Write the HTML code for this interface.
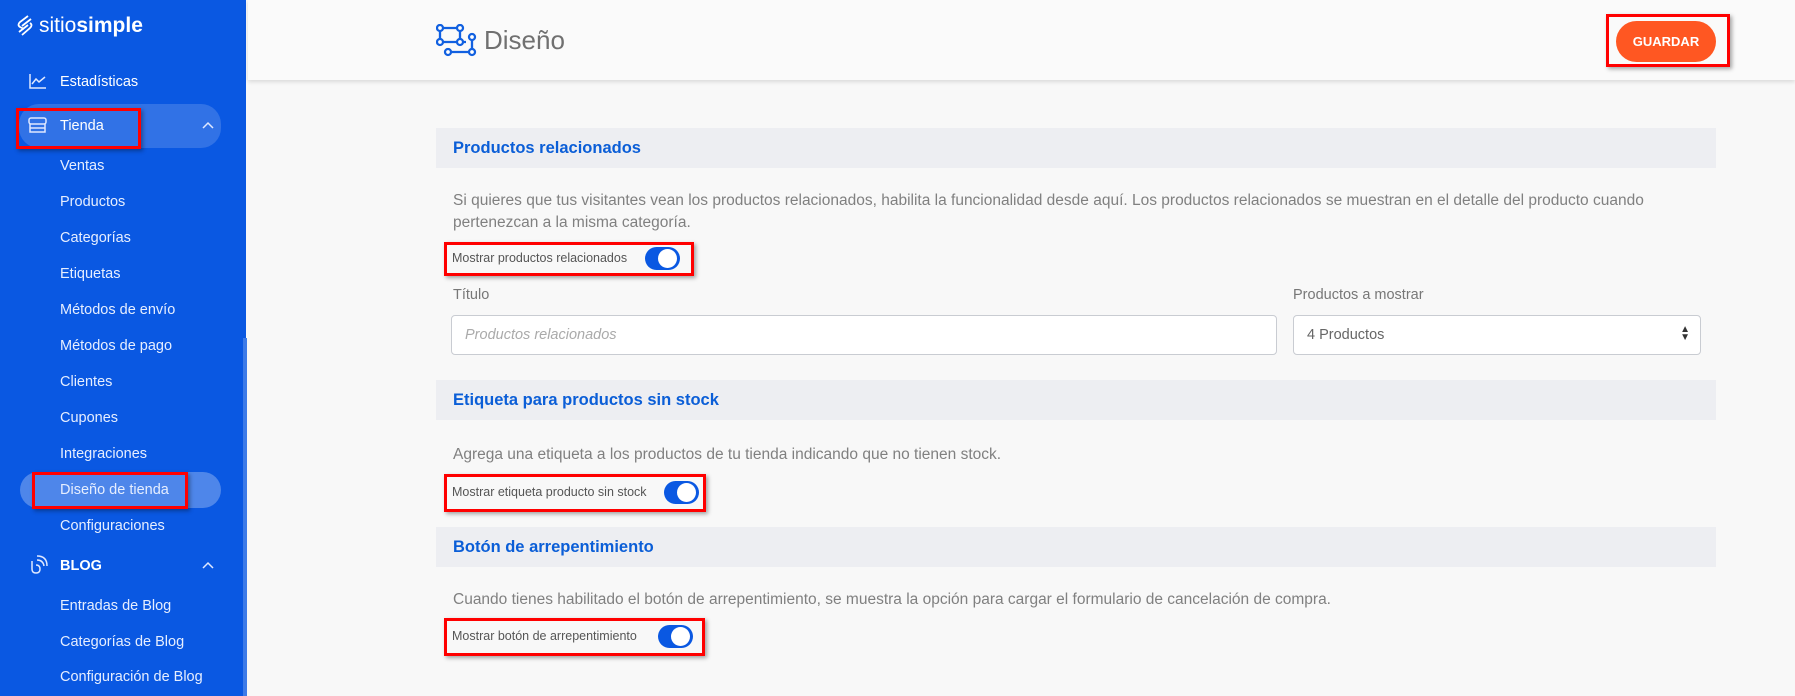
<!DOCTYPE html>
<html><head><meta charset="utf-8"><style>
*{box-sizing:border-box;margin:0;padding:0}
body{width:1795px;height:696px;overflow:hidden;background:#f8f8f8;font-family:"Liberation Sans",sans-serif;position:relative}
.sb{position:absolute;left:0;top:0;width:246px;height:696px;background:#0a58e2;color:#fff}
.sb .scroll{position:absolute;left:243px;top:338px;width:4px;height:358px;background:#3d7be8}
.logo{position:absolute;left:17px;top:14px;font-size:21px;color:#fff;display:flex;align-items:center;gap:6px}
.logo b{font-weight:bold}
.it{position:absolute;left:60px;font-size:14.5px;color:#e6eeff;line-height:18px}
.pill{position:absolute;background:rgba(255,255,255,.16);border-radius:20px}
.hdr{position:absolute;left:248px;top:0;right:0;height:80px;background:#fafafa;box-shadow:0 2px 4px rgba(0,0,0,.12)}
.rb{position:absolute;border:3px solid #f00;box-shadow:2px 2px 4px rgba(0,0,0,.35)}
.bar{position:absolute;left:436px;width:1280px;height:40px;background:#edeef2}
.bar span{position:absolute;left:17px;top:11px;font-size:16.5px;font-weight:bold;color:#0b5ed7}
.p{position:absolute;left:453px;font-size:15.5px;color:#808080;line-height:22px;width:1250px}
.tg{position:absolute;font-size:12.5px;color:#555}
.sw{position:absolute;width:35px;height:23px;border-radius:12px;background:#0a58e2}
.sw:after{content:"";position:absolute;right:3px;top:2px;width:19px;height:19px;border-radius:50%;background:#fff}
.lbl{position:absolute;font-size:14.5px;color:#777}
.in{position:absolute;background:#fff;border:1px solid #c9ccd2;border-radius:4px;font-size:14.5px;color:#666;padding:11px 13px}
.chev{position:absolute;left:202px}
</style></head><body>
<div class="sb">
<div class="scroll"></div>
<div class="logo"><svg width="16" height="22" viewBox="0 0 16 22" fill="none" stroke="#fff" stroke-width="1.8"><path d="M11 1 L3 7 Q0 10 3 12 L7 14"/><path d="M14 4 L5 11"/><path d="M13 8 Q16 10 13 13 L5 20"/><path d="M11 10 L2 17"/></svg><span>sitio<b>simple</b></span></div>
<svg style="position:absolute;left:29px;top:73px" width="18" height="16" fill="none" stroke="#dfe8ff" stroke-width="1.5"><path d="M1 1V15H17"/><path d="M3 11L7 6L10 9L16 4"/></svg>
<div class="it" style="top:73px;color:#fff">Estadísticas</div>
<div class="pill" style="left:19px;top:104px;width:202px;height:44px"></div>
<svg style="position:absolute;left:28px;top:117px" width="19" height="17" fill="none" stroke="#dfe8ff" stroke-width="1.5"><rect x="1" y="1" width="17" height="6" rx="2"/><path d="M2 7V15H17V7M2 11H17"/></svg>
<div class="it" style="top:117px;color:#fff">Tienda</div>
<svg class="chev" style="top:121px" width="12" height="8" fill="none" stroke="#dfe8ff" stroke-width="1.5"><path d="M1 7L6 2L11 7"/></svg>
<div class="rb" style="left:16px;top:108px;width:125px;height:41px"></div>
<div class="it" style="top:157px">Ventas</div>
<div class="it" style="top:193px">Productos</div>
<div class="it" style="top:229px">Categorías</div>
<div class="it" style="top:265px">Etiquetas</div>
<div class="it" style="top:301px">Métodos de envío</div>
<div class="it" style="top:337px">Métodos de pago</div>
<div class="it" style="top:373px">Clientes</div>
<div class="it" style="top:409px">Cupones</div>
<div class="it" style="top:445px">Integraciones</div>
<div class="pill" style="left:20px;top:472px;width:201px;height:36px;background:rgba(255,255,255,.28)"></div>
<div class="rb" style="left:32px;top:472px;width:156px;height:37px"></div>
<div class="it" style="top:481px">Diseño de tienda</div>
<div class="it" style="top:517px">Configuraciones</div>
<svg style="position:absolute;left:28px;top:555px" width="20" height="20" fill="none" stroke="#dfe8ff" stroke-width="1.5"><path d="M4 6V14Q4 18 8 18Q12 18 12 14Q12 10 8 10"/><path d="M9 5Q15 5 16 11M9 1Q19 1 19 11"/></svg>
<div class="it" style="top:557px;font-weight:bold;color:#fff">BLOG</div>
<svg class="chev" style="top:561px" width="12" height="8" fill="none" stroke="#dfe8ff" stroke-width="1.5"><path d="M1 7L6 2L11 7"/></svg>
<div class="it" style="top:597px">Entradas de Blog</div>
<div class="it" style="top:633px">Categorías de Blog</div>
<div class="it" style="top:668px">Configuración de Blog</div>
</div>
<div class="hdr"></div>
<svg style="position:absolute;left:436px;top:24px" width="42" height="33" fill="none" stroke="#1160e0" stroke-width="2.3"><path d="M4 4H24V18H4Z"/><path d="M24 18H30M36 13V28H12"/><g fill="#fff"><circle cx="4" cy="4" r="3"/><circle cx="24" cy="4" r="3"/><circle cx="4" cy="18" r="3"/><circle cx="24" cy="18" r="3"/><circle cx="36" cy="13" r="3"/><circle cx="36" cy="28" r="3"/><circle cx="12" cy="28" r="3"/></g></svg>
<div style="position:absolute;left:484px;top:25px;font-size:26px;color:#707070">Diseño</div>
<div style="position:absolute;left:1616px;top:21px;width:100px;height:41px;border-radius:21px;background:#ff5722;color:#fff;font-size:13px;font-weight:bold;text-align:center;line-height:41px">GUARDAR</div>
<div class="rb" style="left:1606px;top:14px;width:124px;height:53px"></div>

<div class="bar" style="top:128px"><span>Productos relacionados</span></div>
<div class="p" style="top:190px">Si quieres que tus visitantes vean los productos relacionados, habilita la funcionalidad desde aquí. Los productos relacionados se muestran en el detalle del producto cuando pertenezcan a la misma categoría.</div>
<div class="rb" style="left:444px;top:242px;width:250px;height:34px"></div>
<div class="tg" style="left:452px;top:251px">Mostrar productos relacionados</div>
<div class="sw" style="left:645px;top:247px"></div>
<div class="lbl" style="left:453px;top:287px">Título</div>
<div class="lbl" style="left:1293px;top:287px">Productos a mostrar</div>
<div class="in" style="left:451px;top:315px;width:826px;height:40px;color:#aaa;font-style:italic">Productos relacionados</div>
<div class="in" style="left:1293px;top:315px;width:408px;height:40px">4 Productos<span style="position:absolute;right:10px;top:10px;font-size:10px;color:#333;line-height:8px">▲<br>▼</span></div>

<div class="bar" style="top:380px"><span>Etiqueta para productos sin stock</span></div>
<div class="p" style="top:444px">Agrega una etiqueta a los productos de tu tienda indicando que no tienen stock.</div>
<div class="rb" style="left:444px;top:474px;width:262px;height:38px"></div>
<div class="tg" style="left:452px;top:485px">Mostrar etiqueta producto sin stock</div>
<div class="sw" style="left:664px;top:481px"></div>

<div class="bar" style="top:527px"><span>Botón de arrepentimiento</span></div>
<div class="p" style="top:589px">Cuando tienes habilitado el botón de arrepentimiento, se muestra la opción para cargar el formulario de cancelación de compra.</div>
<div class="rb" style="left:444px;top:618px;width:261px;height:38px"></div>
<div class="tg" style="left:452px;top:629px">Mostrar botón de arrepentimiento</div>
<div class="sw" style="left:658px;top:625px"></div>
</body></html>
